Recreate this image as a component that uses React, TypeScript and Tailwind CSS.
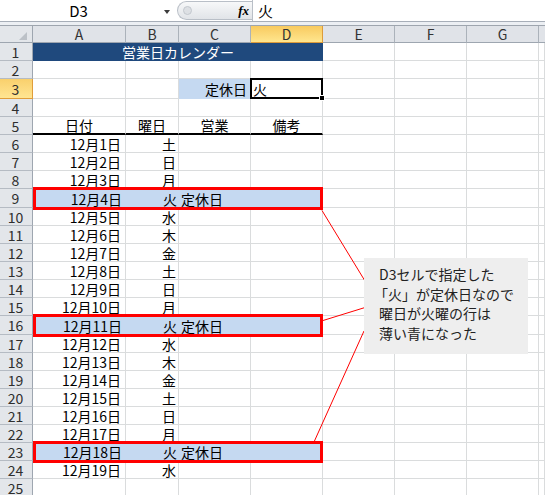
import type { ReactNode } from 'react'

const COL_W = ['w-[93px]', 'w-[53px]', 'w-[72px]', 'w-[72px]', 'w-[72px]', 'w-[72px]', 'w-[72px]']
const LETTERS = ['A', 'B', 'C', 'D', 'E', 'F', 'G']
const WEEK = ['土', '日', '月', '火', '水', '木', '金'] // 12/1 is Saturday
const GRID = 'border-r border-b border-r-[#dadcdd] border-b-[#dadcdd]'

function rowH(r: number) {
  if (r === 3) return 'h-[20px]'
  if (r === 9 || r === 16) return 'h-[19px]'
  return 'h-[18px]'
}

type CellProps = { col: number; className?: string; children?: ReactNode }

function Cell({ col, className = GRID, children }: CellProps) {
  return (
    <div className={`${COL_W[col]} flex h-full shrink-0 items-center whitespace-nowrap ${className}`}>
      {children}
    </div>
  )
}

// empty cells from column `from` up to the right edge
function Blank({ from }: { from: number }) {
  const cells = []
  for (let c = from; c < 7; c++) cells.push(<Cell key={c} col={c} />)
  cells.push(<div key="h" className={`h-full flex-1 ${GRID}`} />)
  return <>{cells}</>
}

function RowHead({ n }: { n: number }) {
  const active = n === 3
  return (
    <div
      className={`flex h-full w-[33px] shrink-0 items-center justify-center border-r border-b pr-[1px] text-[14px] text-[#2e2e2e] ${
        active
          ? 'bg-linear-to-b from-[#f9d06c] to-[#ffe592] border-r-[#e09d3a] border-b-[#e09d3a]'
          : 'bg-[#e3e6ea] border-r-[#9ea6b0] border-b-[#b5bbc3]'
      }`}
    >
      {String(n)}
    </div>
  )
}

function FormulaBar() {
  return (
    <div className="flex h-[22px] border-b border-[#a7aeb8] bg-white">
      <div className="flex w-[177px] shrink-0 items-center">
        <div className="w-[157px] text-center text-[15px] leading-none">D3</div>
        <div className="ml-[7px] mt-[2px] h-0 w-0 border-x-[3.5px] border-t-[4px] border-x-transparent border-t-[#3c3c3c]" />
      </div>
      <div className="relative my-[1px] flex w-[75px] shrink-0 items-center justify-end rounded-l-full border border-r-0 border-[#b9bfc7] bg-linear-to-b from-[#f7f8f9] to-[#e1e4e8] pr-[3px]">
        <span className="absolute left-[5px] top-[4px] size-[9px] rounded-full border border-[#c3c8ce] bg-[#dde0e4]" />
        <span className="font-['Liberation_Serif',serif] text-[13px] font-bold italic leading-none">fx</span>
      </div>
      <div className="flex flex-1 items-center border-l border-[#b9bfc7] pl-[5px] text-[15px] leading-none">火</div>
    </div>
  )
}

function HeaderRow() {
  return (
    <div className="flex h-[18px] border-t border-[#9ea5ae]">
      <div className="flex h-full w-[33px] shrink-0 items-end justify-end border-r border-b border-r-[#9ea6b0] border-b-[#9ea6b0] bg-[#e3e6ea] pr-[5px] pb-[2px]">
        <svg width="8" height="8" viewBox="0 0 8 8">
          <polygon points="8,0 8,8 0,8" fill="#bcc1c7" />
        </svg>
      </div>
      {LETTERS.map((l, i) => (
        <div
          key={l}
          className={`${COL_W[i]} flex h-full shrink-0 items-center justify-center border-r border-b text-[14px] text-[#333] ${
            l === 'D'
              ? 'bg-linear-to-b from-[#f8ca5e] to-[#ffe68e] border-r-[#dd9c3b] border-b-[#dd9c3b]'
              : 'bg-[#e0e3e8] border-r-[#abb2ba] border-b-[#9ea6b0]'
          }`}
        >
          {l}
        </div>
      ))}
      <div className="h-full flex-1 border-b border-[#9ea6b0] bg-[#e0e3e8]" />
    </div>
  )
}

function SheetRow({ r }: { r: number }) {
  let body: ReactNode = <Blank from={0} />

  if (r === 1) {
    body = (
      <>
        <div className="flex h-full w-[290px] shrink-0 items-center justify-center bg-[#1f497d] text-white">
          営業日カレンダー
        </div>
        <Blank from={4} />
      </>
    )
  } else if (r === 3) {
    body = (
      <>
        <Cell col={0} />
        <Cell col={1} />
        <Cell col={2} className="justify-end border-r border-b border-r-[#c5d9f1] border-b-[#c5d9f1] bg-[#c5d9f1] pr-[3px]">
          定休日
        </Cell>
        <Cell col={3} className={`relative pl-[2px] ${GRID}`}>
          火
          <div className="absolute -top-[1px] -left-[1px] -right-[1px] -bottom-[1px] border-2 border-black" />
          <div className="absolute -right-[3px] -bottom-[3px] size-[6px] border border-white bg-black" />
        </Cell>
        <Blank from={4} />
      </>
    )
  } else if (r === 5) {
    const head = 'justify-center border-r border-b-2 border-r-[#dadcdd] border-b-black'
    body = (
      <>
        <Cell col={0} className={head}>日付</Cell>
        <Cell col={1} className={head}>曜日</Cell>
        <Cell col={2} className={head}>営業</Cell>
        <Cell col={3} className={head}>備考</Cell>
        <Blank from={4} />
      </>
    )
  } else if (r >= 6 && r <= 24) {
    const d = r - 5
    const date = `12月${d}日`
    const wd = WEEK[(d - 1) % 7]
    if (wd === '火') {
      body = (
        <>
          <div className="relative flex h-full w-[290px] shrink-0 bg-[#c5d9f1]">
            <Cell col={0} className="justify-end pr-[4px]">{date}</Cell>
            <Cell col={1} className="justify-end pr-[2px]">{wd}</Cell>
            <Cell col={2} className="pl-[2px]">定休日</Cell>
            <Cell col={3} className="" />
            <div className="absolute -top-[2px] -bottom-[2px] left-0 right-0 z-10 border-[3px] border-[#ff0000]" />
          </div>
          <Blank from={4} />
        </>
      )
    } else {
      body = (
        <>
          <Cell col={0} className={`justify-end pr-[4px] ${GRID}`}>{date}</Cell>
          <Cell col={1} className={`justify-end pr-[2px] ${GRID}`}>{wd}</Cell>
          <Blank from={2} />
        </>
      )
    }
  }

  return (
    <div className={`flex ${rowH(r)}`}>
      <RowHead n={r} />
      {body}
    </div>
  )
}

export default function App() {
  const rows = Array.from({ length: 25 }, (_, i) => i + 1)
  return (
    <div className="relative h-[495px] w-[545px] overflow-hidden bg-white font-['Noto_Sans_CJK_JP','Noto_Sans',sans-serif] text-[14px] leading-none text-black">
      <FormulaBar />
      <div className="h-[3px] bg-[#eceff3]" />
      <HeaderRow />
      {rows.map((r) => (
        <SheetRow key={r} r={r} />
      ))}

      {/* callout leader lines */}
      <svg className="pointer-events-none absolute left-0 top-0 z-20" width="545" height="495">
        <g stroke="#ff0000" strokeWidth="1">
          <line x1="322" y1="210.5" x2="365" y2="281" />
          <line x1="323" y1="320.5" x2="365" y2="307.5" />
          <line x1="364" y1="331" x2="314" y2="442" />
        </g>
      </svg>

      <div className="absolute left-[364px] top-[258px] z-20 h-[96px] w-[164px] bg-[#eeeeee] pl-[15px] pt-[7px] text-[14px] leading-[19.5px] text-[#222]">
        <div>D3セルで指定した</div>
        <div className="-ml-[5px]">「火」が定休日なので</div>
        <div>曜日が火曜の行は</div>
        <div>薄い青になった</div>
      </div>
    </div>
  )
}
